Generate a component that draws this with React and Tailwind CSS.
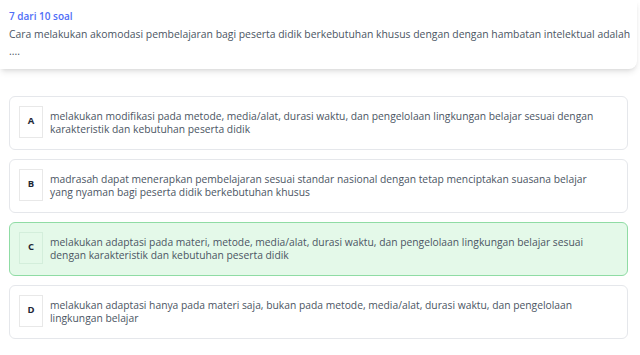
import React from 'react';

const options = [
  {
    key: 'A',
    text: 'melakukan modifikasi pada metode, media/alat, durasi waktu, dan pengelolaan lingkungan belajar sesuai dengan karakteristik dan kebutuhan peserta didik',
  },
  {
    key: 'B',
    text: 'madrasah dapat menerapkan pembelajaran sesuai standar nasional dengan tetap menciptakan suasana belajar yang nyaman bagi peserta didik berkebutuhan khusus',
  },
  {
    key: 'C',
    text: 'melakukan adaptasi pada materi, metode, media/alat, durasi waktu, dan pengelolaan lingkungan belajar sesuai dengan karakteristik dan kebutuhan peserta didik',
    selected: true,
  },
  {
    key: 'D',
    text: 'melakukan adaptasi hanya pada materi saja, bukan pada metode, media/alat, durasi waktu, dan pengelolaan lingkungan belajar',
  },
];

const OptionCard = ({ option }) => (
  <div
    className={
      option.selected
        ? 'flex items-center h-[54px] rounded-md border border-[#8fdca4] bg-[#e4f9e9] pl-[9px] pr-[17px]'
        : 'flex items-center h-[54px] rounded-md border border-[#e5e7eb] bg-white pl-[9px] pr-[17px]'
    }
  >
    <div
      className={
        option.selected
          ? 'flex items-center justify-center shrink-0 w-[24px] h-[32px] -mt-[3px] border border-[#d3eedb] text-[9.5px] font-bold text-[#1f2937]'
          : 'flex items-center justify-center shrink-0 w-[24px] h-[32px] -mt-[3px] border border-[#e8e8e8] text-[9.5px] font-bold text-[#1f2937]'
      }
    >
      {option.key}
    </div>
    <p className="ml-[7px] text-[10.3px] leading-[13px] text-[#4b5563]">{option.text}</p>
  </div>
);

const App = () => {
  return (
    <div className="min-h-[355px] bg-white" style={{ fontFamily: '"Open Sans", "Liberation Sans", sans-serif' }}>
      {/* Question Header */}
      <div className="bg-white rounded-br-lg shadow-md mr-[3px] h-[69px] pl-[9px] pt-[9px]">
        <div className="text-[10px] font-semibold text-[#4f6ef7] leading-[14px]">7 dari 10 soal</div>
        <p className="mt-[3px] text-[10.4px] leading-[17px] text-[#4b5563] pr-[6px]">
          Cara melakukan akomodasi pembelajaran bagi peserta didik berkebutuhan khusus dengan dengan hambatan intelektual adalah ....
        </p>
      </div>

      {/* Options */}
      <div className="flex flex-col gap-[9px] pl-[9px] pr-[12px] pt-[27px]">
        {options.map(option => (
          <OptionCard key={option.key} option={option} />
        ))}
      </div>
    </div>
  );
};

export default App;
